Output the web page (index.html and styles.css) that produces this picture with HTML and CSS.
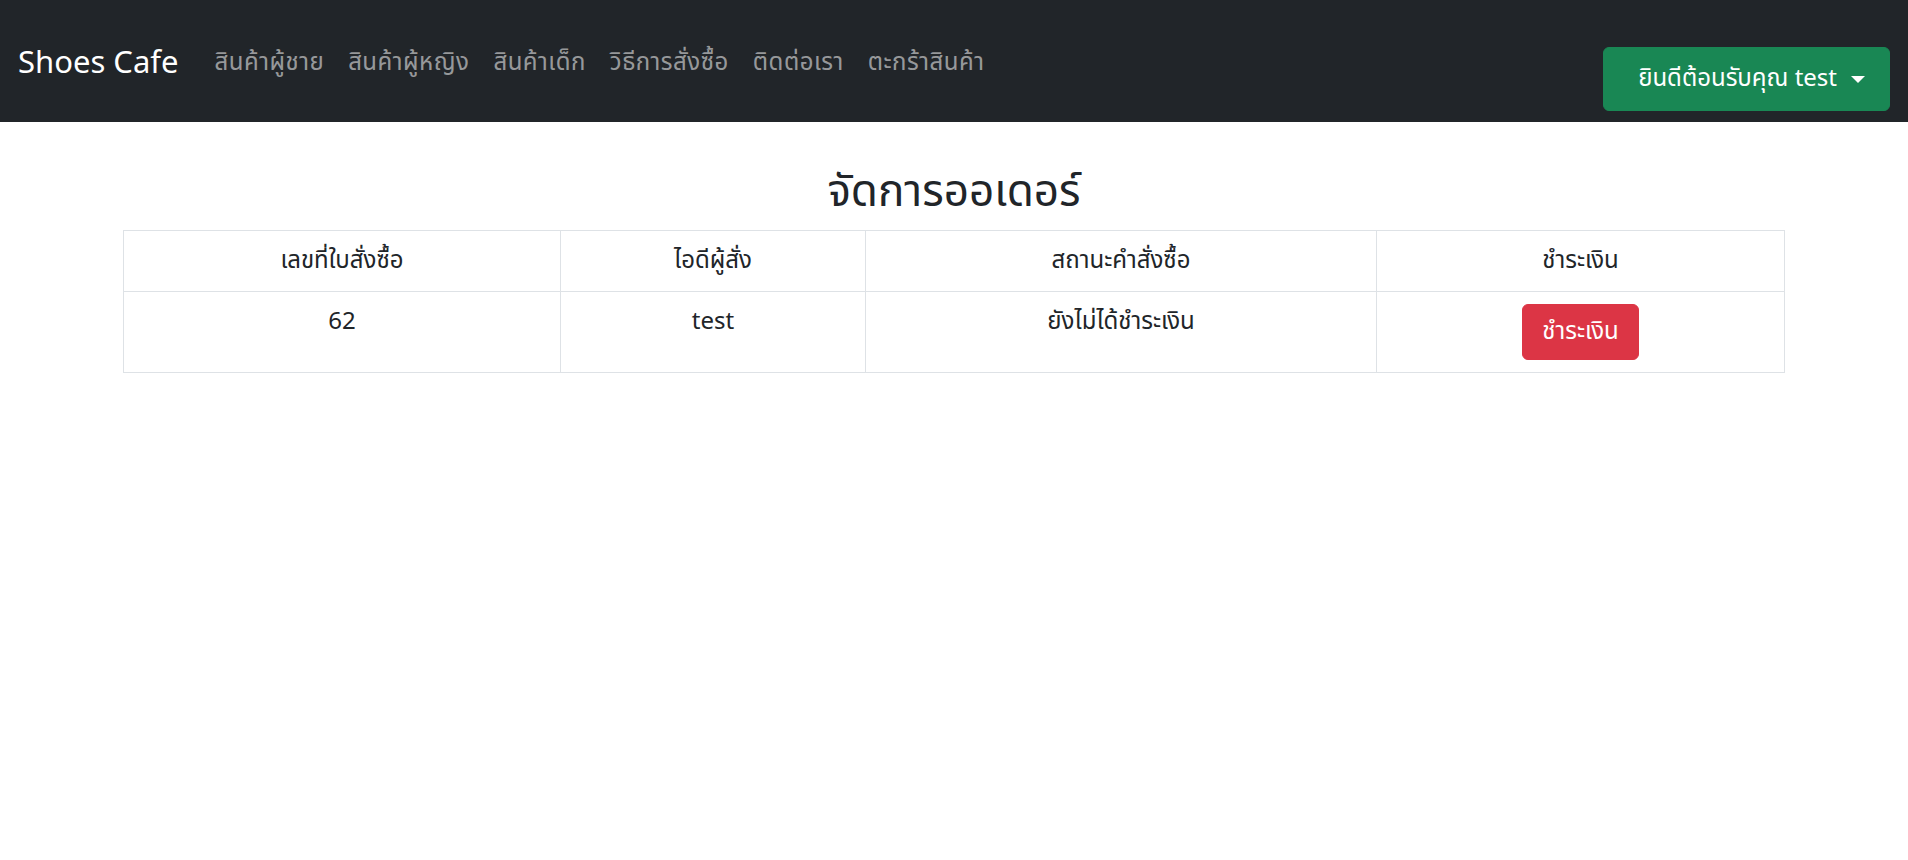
FILE: index.html
```html
<!DOCTYPE html>
<html lang="th">
<head>
<meta charset="utf-8">
<title>Shoes Cafe</title>
<link rel="stylesheet" href="styles.css">
</head>
<body>
<nav class="navbar">
  <div class="nav-left">
    <a class="brand" href="#">Shoes Cafe</a>
    <ul class="nav-links">
      <li><a href="#">สินค้าผู้ชาย</a></li>
      <li><a href="#">สินค้าผู้หญิง</a></li>
      <li><a href="#">สินค้าเด็ก</a></li>
      <li><a href="#">วิธีการสั่งซื้อ</a></li>
      <li><a href="#">ติดต่อเรา</a></li>
      <li><a href="#">ตะกร้าสินค้า</a></li>
    </ul>
  </div>
  <div class="nav-right">
    <button class="btn-user">ยินดีต้อนรับคุณ test <span class="caret"></span></button>
  </div>
</nav>
<main class="container">
  <h3 class="title">จัดการออเดอร์</h3>
  <table class="orders">
    <colgroup>
      <col class="c1"><col class="c2"><col class="c3"><col class="c4">
    </colgroup>
    <thead>
      <tr><th>เลขที่ใบสั่งซื้อ</th><th>ไอดีผู้สั่ง</th><th>สถานะคำสั่งซื้อ</th><th>ชำระเงิน</th></tr>
    </thead>
    <tbody>
      <tr><td>62</td><td>test</td><td>ยังไม่ได้ชำระเงิน</td><td><button class="btn-pay">ชำระเงิน</button></td></tr>
    </tbody>
  </table>
</main>
</body>
</html>
```
FILE: styles.css
```css
* { box-sizing: border-box; }
html, body { margin: 0; padding: 0; }
body {
  font-family: "Noto Sans Thai", "Noto Sans Thai UI", "Noto Sans", sans-serif;
  font-size: 24px;
  line-height: 1.5;
  color: #212529;
  background: #fff;
}
a { text-decoration: none; }

.navbar {
  background: #212529;
  display: flex;
  align-items: center;
  justify-content: space-between;
  padding: 14px 18px 10px;
  height: 122px;
}
.nav-left { display: flex; align-items: center; }
.brand {
  color: #fff;
  font-size: 31px;
  line-height: 45px;
  padding: 7px 0;
  margin-right: 24px;
}
.nav-links { list-style: none; margin: 0; padding: 0; display: flex; }
.nav-links a {
  display: block;
  padding: 12px 12px;
  color: rgba(255,255,255,.55);
  line-height: 36px;
  letter-spacing: 0.5px;
}
.nav-right { align-self: flex-end; }
.btn-user {
  font: inherit;
  font-size: 24px;
  line-height: 36px;
  color: #fff;
  background: #198754;
  border: 1px solid #198754;
  border-radius: 6px;
  padding: 13px 24px 13px 34px;
  height: 64px;
  display: flex;
  align-items: center;
  margin-bottom: 1px;
}
.caret {
  display: inline-block;
  margin-left: 14px;
  width: 0; height: 0;
  border-top: 7px solid #fff;
  border-left: 7px solid transparent;
  border-right: 7px solid transparent;
}

.container {
  width: 1662px;
  margin: 0 auto;
}
.title {
  font-size: 44px;
  font-weight: 400;
  line-height: 50px;
  text-align: center;
  margin: 46px 0 12px;
}
.orders {
  width: 100%;
  border-collapse: collapse;
  border: 1px solid #dee2e6;
}
.c1 { width: 437px; }
.c2 { width: 305px; }
.c3 { width: 511px; }
.orders th, .orders td {
  border: 1px solid #dee2e6;
  padding: 12px;
  text-align: center;
  vertical-align: top;
  font-weight: 400;
}
.btn-pay {
  font: inherit;
  font-size: 24px;
  line-height: 36px;
  color: #fff;
  background: #dc3545;
  border: 1px solid #dc3545;
  border-radius: 6px;
  padding: 9px 19px;
}
```
